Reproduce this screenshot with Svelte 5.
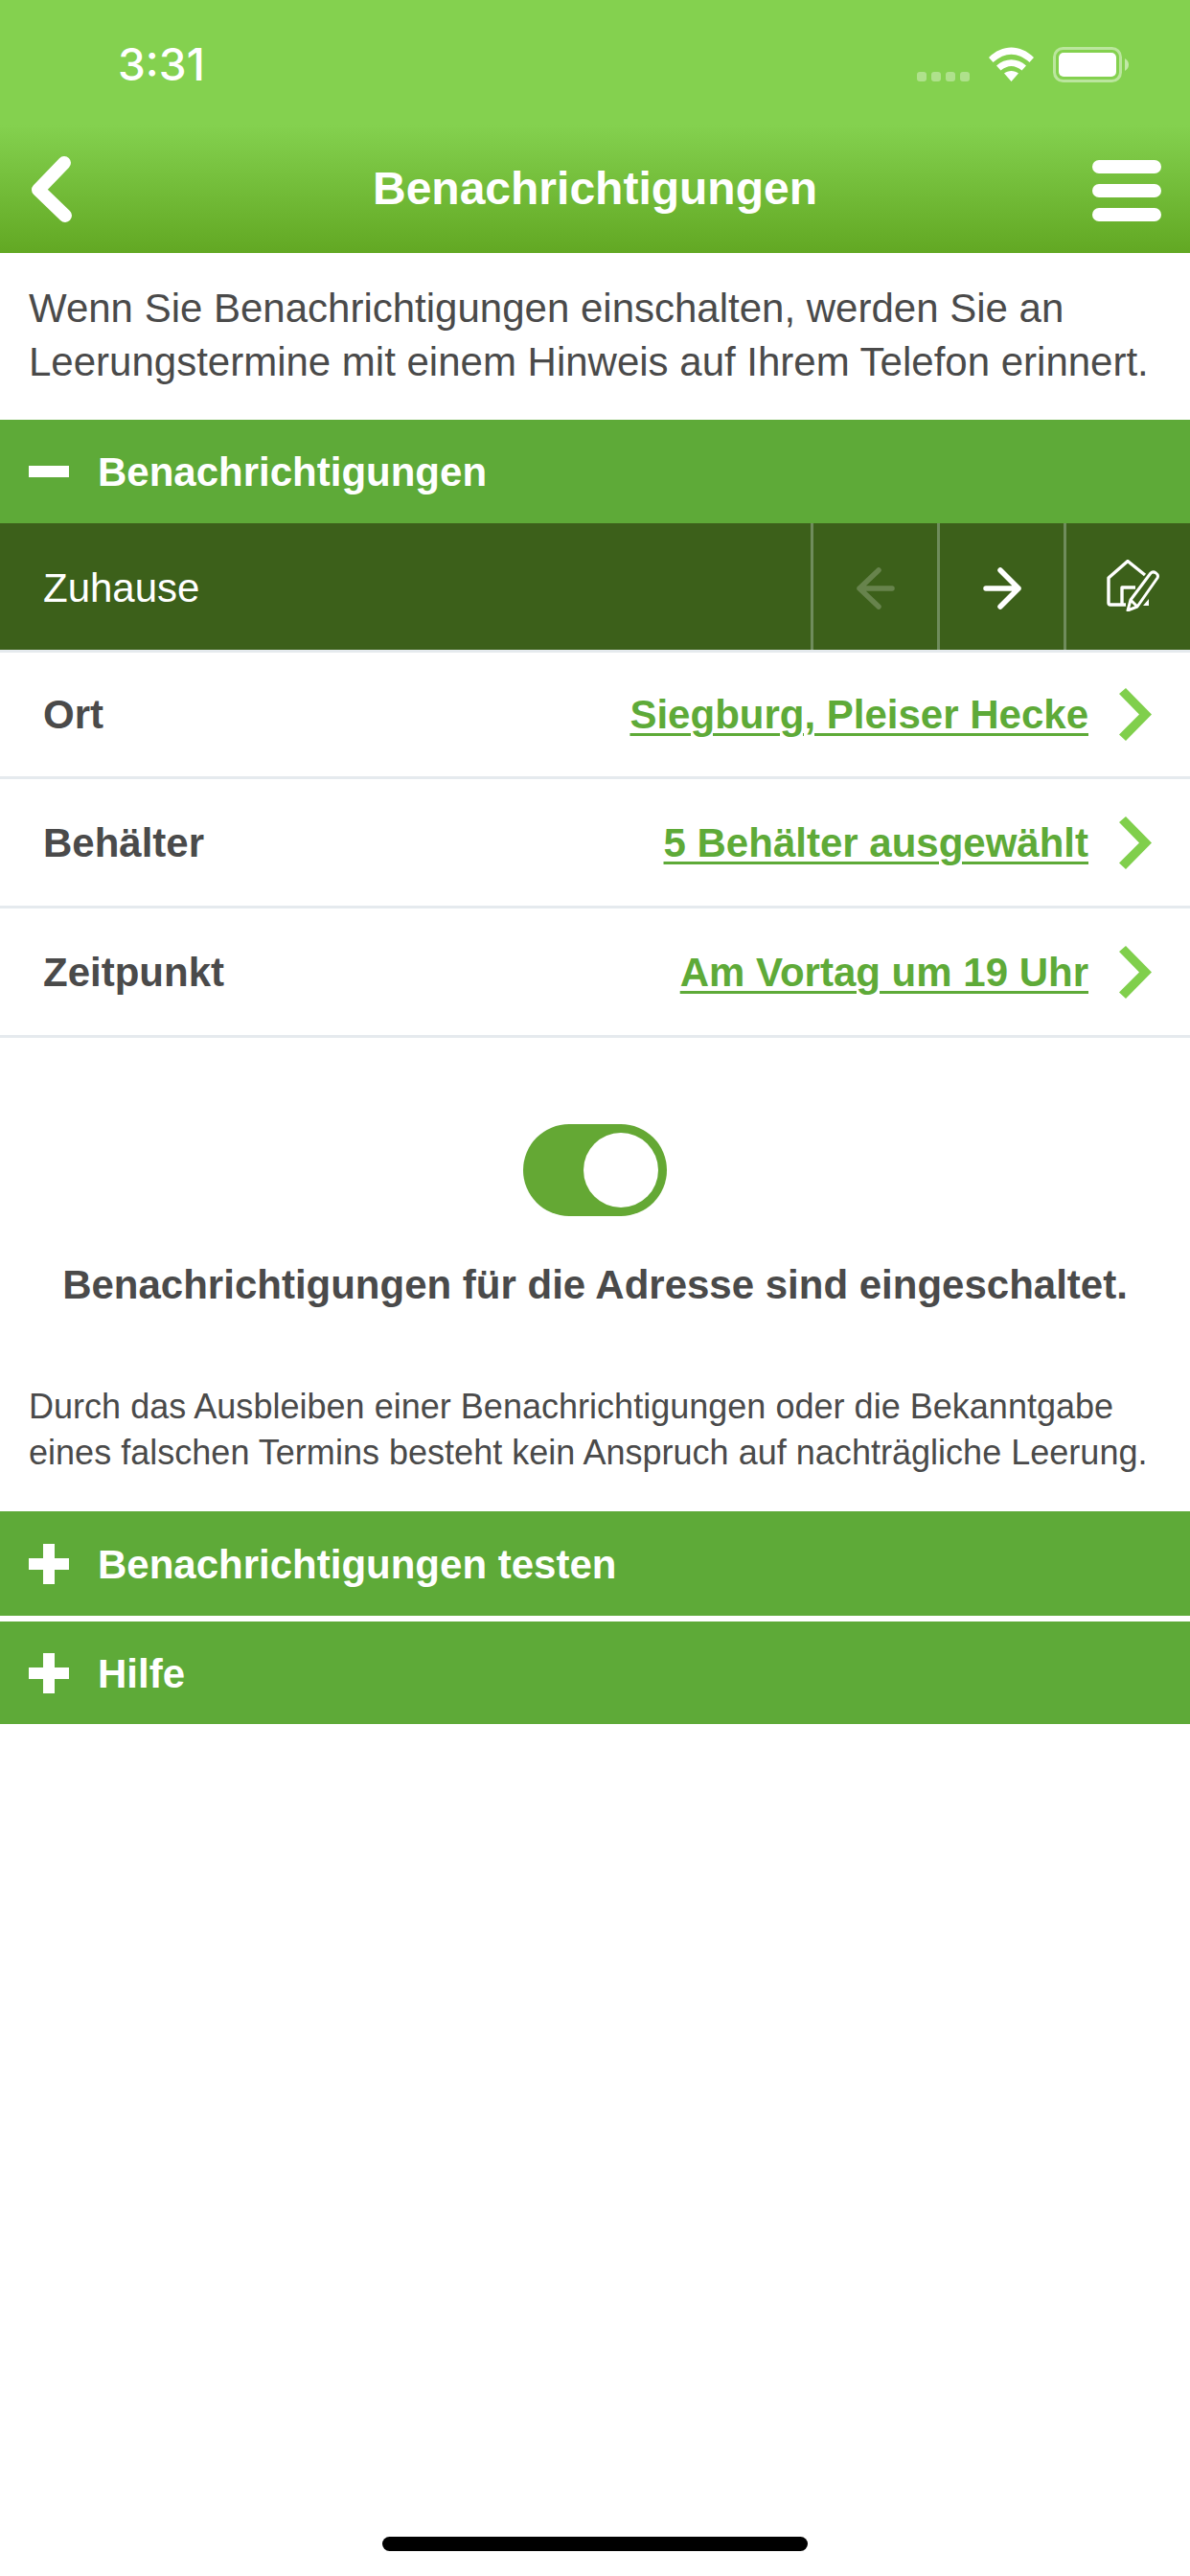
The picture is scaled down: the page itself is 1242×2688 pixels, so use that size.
<script>
  const rows = [
    { label: 'Ort', value: 'Siegburg, Pleiser Hecke' },
    { label: 'Behälter', value: '5 Behälter ausgewählt' },
    { label: 'Zeitpunkt', value: 'Am Vortag um 19 Uhr' }
  ];
</script>

<div class="page">
  <header class="header">
    <div class="status">
      <span class="time">3:31</span>
      <div class="status-icons">
        <div class="dots"><i></i><i></i><i></i><i></i></div>
        <svg class="wifi" width="47" height="36" viewBox="0 0 47 36">
          <path d="M0 11 C14 -3 33 -3 47 11 L42.5 16 C30 5 17 5 4.500 16 Z M8 19.500 C17 11 30 11 39 19.500 L34.500 24.500 C27 18.500 20 18.500 12.500 24.500 Z M16 27.500 C20 24 27 24 31 27.500 L23.500 36 Z" fill="#fff"/>
        </svg>
        <svg class="battery" width="79" height="37" viewBox="0 0 79 37">
          <rect x="1.500" y="1.500" width="69" height="34" rx="9" fill="none" stroke="#fff" stroke-opacity=".45" stroke-width="3"/>
          <rect x="6" y="6" width="60" height="25" rx="5" fill="#fff"/>
          <path d="M75 12 C78 14 79 16 79 18.500 C79 21 78 23 75 25 Z" fill="#fff" fill-opacity=".5"/>
        </svg>
      </div>
    </div>
    <div class="nav">
      <svg class="back" width="50" height="76" viewBox="0 0 50 76">
        <path d="M37 10 L10 38 L38 65" fill="none" stroke="#fff" stroke-width="14" stroke-linecap="round" stroke-linejoin="round"/>
      </svg>
      <h1>Benachrichtigungen</h1>
      <div class="burger"><i></i><i></i><i></i></div>
    </div>
  </header>

  <p class="intro">Wenn Sie Benachrichtigungen einschalten, werden Sie an Leerungstermine mit einem Hinweis auf Ihrem Telefon erinnert.</p>

  <div class="section">
    <span class="minus"></span>
    <span class="txt">Benachrichtigungen</span>
  </div>

  <div class="subbar">
    <span class="subtitle">Zuhause</span>
    <div class="cell">
      <svg width="40" height="44" viewBox="0 0 40 44" opacity=".22">
        <path d="M23 3 L3 22 L23 41 M3 22 H37" fill="none" stroke="#fff" stroke-width="5.500" stroke-linecap="round" stroke-linejoin="round"/>
      </svg>
    </div>
    <div class="cell">
      <svg width="40" height="44" viewBox="0 0 40 44">
        <path d="M18 3 L37 22 L18 41 M37 22 H3" fill="none" stroke="#fff" stroke-width="5.500" stroke-linecap="round" stroke-linejoin="round"/>
      </svg>
    </div>
    <div class="cell">
      <svg class="home" width="56" height="54" viewBox="0 0 56 54">
        <path d="M40 16 L22 1.500 L2 19 V45 Q2 47 4 47 H20 M16 47 V29 H30" fill="none" stroke="#fff" stroke-width="3.400" stroke-linejoin="round"/>
        <path d="M22 53 L25 42 L46 14 C49 11 55 15 53 19 L32 49 Z M25 42 L32 49" fill="none" stroke="#fff" stroke-width="3" stroke-linejoin="round"/>
        <path d="M44 41 V48 H38 Z" fill="#fff"/>
      </svg>
    </div>
  </div>

  <ul class="rows">
    {#each rows as row}
      <li class="row">
        <span class="label">{row.label}</span>
        <a class="value" href="#top">{row.value}</a>
        <svg class="chev" width="34" height="55" viewBox="0 0 34 55">
          <path d="M0 6 L7 0 L34 27.500 L7 55 L0 48.500 L21 27.500 Z" fill="#80cf4c"/>
        </svg>
      </li>
    {/each}
  </ul>

  <div class="toggle-box">
    <div class="toggle"><span class="knob"></span></div>
    <p class="state">Benachrichtigungen für die Adresse sind eingeschaltet.</p>
  </div>

  <p class="note">Durch das Ausbleiben einer Benachrichtigungen oder die Bekanntgabe eines falschen Termins besteht kein Anspruch auf nachträgliche Leerung.</p>

  <div class="section first">
    <span class="plus"></span>
    <span class="txt">Benachrichtigungen testen</span>
  </div>
  <div class="section second">
    <span class="plus"></span>
    <span class="txt">Hilfe</span>
  </div>

  <div class="home-indicator"></div>
</div>

<style>
  :global(body) { margin: 0; background: #fff; }
  .page {
    position: relative;
    width: 1242px;
    height: 2688px;
    overflow: hidden;
    background: #fff;
    font-family: "Liberation Sans", Arial, sans-serif;
    color: #4a4a4a;
  }
  .header {
    height: 264px;
    background: linear-gradient(#84d14f 0, #84d14f 130px, #62a823 264px);
    color: #fff;
  }
  .status {
    height: 132px;
    display: flex;
    justify-content: space-between;
    align-items: flex-start;
    padding: 0 64px 0 123px;
    box-sizing: border-box;
  }
  .time { font-family: Inter, "Liberation Sans", sans-serif; font-weight: 500; font-size: 46px; line-height: 56px; margin-top: 39px; }
  .status-icons { display: flex; align-items: flex-start; margin-top: 49px; }
  .dots { display: flex; gap: 5px; margin-top: 26px; margin-right: 20px; }
  .dots i { width: 10px; height: 10px; border-radius: 3px; background: rgba(255,255,255,.35); }
  .wifi { margin-right: 20px; }
  .nav {
    height: 132px;
    display: flex;
    align-items: center;
    justify-content: space-between;
    padding: 0 30px;
    position: relative;
  }
  .nav h1 {
    position: absolute;
    left: 0; right: 0;
    text-align: center;
    margin: 0;
    font-size: 48px;
    line-height: 64px;
    font-weight: 700;
    top: 33px;
  }
  .burger { display: flex; flex-direction: column; gap: 11px; margin-top: 2px; }
  .burger i { width: 72px; height: 14px; border-radius: 7px; background: #fff; }
  .intro {
    margin: 0;
    height: 174px;
    box-sizing: border-box;
    padding: 30px 30px 0;
    font-size: 42px;
    line-height: 56px;
  }
  .section {
    height: 108px;
    background: #5eaa38;
    color: #fff;
    font-size: 42px;
    font-weight: 700;
    display: flex;
    align-items: center;
    gap: 30px;
    padding-left: 30px;
  }
  .txt { padding-top: 2px; }
  .minus { width: 42px; height: 12px; background: #fff; }
  .plus {
    position: relative;
    width: 42px;
    height: 42px;
    flex: none;
  }
  .plus::before, .plus::after { content: ""; position: absolute; background: #fff; }
  .plus::before { left: 0; right: 0; top: 15px; height: 12px; }
  .plus::after { top: 0; bottom: 0; left: 15px; width: 12px; }
  .first { height: 109px; }
  .second { height: 107px; margin-top: 6px; }
  .subbar {
    height: 132px;
    background: #3c601a;
    display: flex;
    align-items: stretch;
    color: #fff;
  }
  .subtitle {
    flex: 1;
    display: flex;
    align-items: center;
    padding: 3px 0 0 45px;
    font-size: 42px;
  }
  .cell {
    width: 132px;
    box-sizing: border-box;
    border-left: 3px solid #6f8c5c;
    padding-top: 4px;
    display: flex;
    align-items: center;
    justify-content: center;
  }
  .home { margin: -6px 0 0 10px; }
  .rows { list-style: none; margin: 0; padding: 0; border-top: 3px solid #e5eaee; }
  .row {
    height: 135px;
    box-sizing: border-box;
    border-bottom: 3px solid #e5eaee;
    display: flex;
    align-items: center;
    padding: 0 40px 0 45px;
    font-size: 42px;
    font-weight: 700;
  }
  .row:first-child { height: 132px; }
  .label { flex: 1; padding-top: 1px; }
  .value { color: #5eaa38; padding-top: 1px; text-decoration: underline; text-underline-offset: 5px; text-decoration-thickness: 3px; margin-right: 32px; }
  .toggle-box {
    height: 361px;
    box-sizing: border-box;
    padding-top: 90px;
    text-align: center;
  }
  .toggle {
    width: 150px;
    height: 96px;
    margin: 0 auto;
    border-radius: 48px;
    background: #64a834;
    position: relative;
  }
  .knob {
    position: absolute;
    right: 9px;
    top: 9px;
    width: 78px;
    height: 78px;
    border-radius: 50%;
    background: #fff;
  }
  .state {
    margin: 49px 0 0;
    font-size: 42px;
    line-height: 46px;
    font-weight: 700;
  }
  .note {
    margin: 0;
    height: 133px;
    box-sizing: border-box;
    padding: 0 30px;
    font-size: 36px;
    line-height: 48px;
    letter-spacing: .02px;
  }
  .home-indicator {
    position: absolute;
    left: 399px;
    top: 2647px;
    width: 444px;
    height: 15px;
    border-radius: 8px;
    background: #000;
  }
</style>
